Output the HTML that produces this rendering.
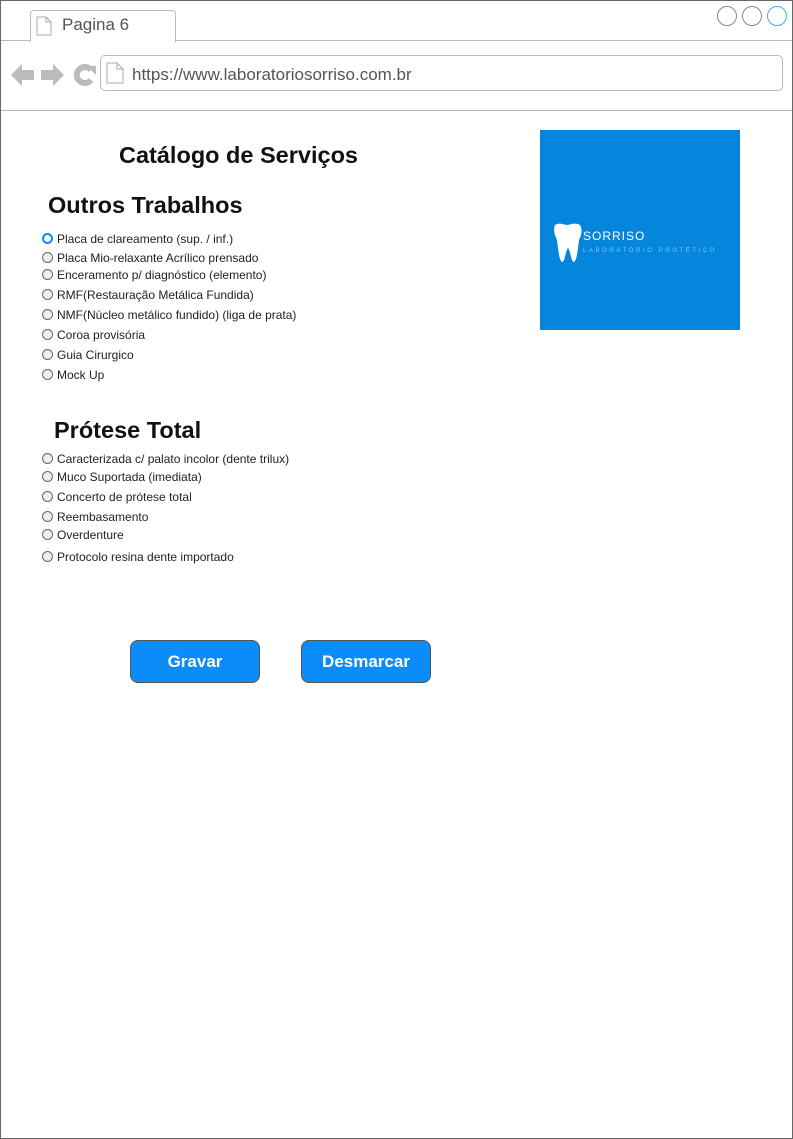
<!DOCTYPE html>
<html><head><meta charset="utf-8"><style>
body{margin:0;width:793px;height:1139px;position:relative;overflow:hidden;font-family:"Liberation Sans",sans-serif;background:#fff}
.a{position:absolute}
.frame{left:0;top:0;width:791px;height:1137px;border:1px solid #666}
.r{position:absolute;left:42px;font-size:12px;color:#222;line-height:14px}
.r i{position:absolute;left:0;top:1px;width:9px;height:9px;border:1px solid #666;border-radius:50%;background:#eee}
.r span{position:absolute;left:15px;top:0;white-space:nowrap}
.btn{position:absolute;top:640px;width:130px;height:43px;background:#0a8cfb;border:1px solid #555;border-radius:8px;color:#fff;font-weight:bold;font-size:17px;text-align:center;line-height:42px;box-sizing:border-box}
</style></head><body>
<div class="a frame"></div>
<div class="a" style="left:1px;top:40px;width:791px;height:1px;background:#bbb"></div>
<div class="a" style="left:30px;top:10px;width:144px;height:31px;border:1px solid #bbb;border-bottom:none;border-radius:4px 4px 0 0;background:#fff"></div>
<svg class="a" style="left:36px;top:16px" width="16" height="20"><path d="M1 1H10L15 6V19H1Z M10 1V6H15" fill="#fff" stroke="#aaa"/></svg>
<div class="a" style="left:62px;top:15px;font-size:17px;color:#555">Pagina 6</div>
<div class="a" style="left:717px;top:6px;width:18px;height:18px;border:1px solid #888;border-radius:50%"></div>
<div class="a" style="left:742px;top:6px;width:18px;height:18px;border:1px solid #888;border-radius:50%"></div>
<div class="a" style="left:767px;top:6px;width:18px;height:18px;border:1px solid #4af;border-radius:50%"></div>
<svg class="a" style="left:10px;top:62px" width="90" height="26">
<path d="M1 13L12 2V8H24V18H12V24Z" fill="#bbb"/>
<path d="M54 13L43 2V8H31V18H43V24Z" fill="#bbb"/>
<path d="M81 8A8 8 0 1 0 81 18" fill="none" stroke="#bbb" stroke-width="6"/>
<path d="M77 4H86V13Z" fill="#bbb"/>
</svg>
<div class="a" style="left:100px;top:55px;width:681px;height:34px;border:1px solid #bbb;border-radius:5px"></div>
<svg class="a" style="left:106px;top:62px" width="18" height="22"><path d="M1 1H11L17 7V21H1Z M11 1V7H17" fill="#fff" stroke="#aaa"/></svg>
<div class="a" style="left:132px;top:65px;font-size:17px;color:#555">https://www.laboratoriosorriso.com.br</div>
<div class="a" style="left:1px;top:110px;width:791px;height:1px;background:#bbb"></div>
<div class="a" style="left:119px;top:142px;font-size:23.5px;font-weight:bold;color:#111">Catálogo de Serviços</div>
<div class="a" style="left:48px;top:192px;font-size:23.5px;font-weight:bold;color:#111">Outros Trabalhos</div>
<div class="a" style="left:54px;top:417px;font-size:23.5px;font-weight:bold;color:#111">Prótese Total</div>
<div class="a" style="left:540px;top:130px;width:200px;height:200px;background:#0585dc"></div>
<svg class="a" style="left:552px;top:222px" width="32" height="42"><path d="M3 3C8 0 12 3 15 3C18 3 23 0 28 3C31 8 29 14 27 18C26 26 25 38 22 40C19 40 19 30 16 26C13 30 13 40 10 40C7 38 6 26 5 18C3 14 1 8 3 3Z" fill="#fff"/></svg>
<div class="a" style="left:583px;top:229px;font-size:12px;color:#fff;letter-spacing:1px">SORRISO</div>
<div class="a" style="left:583px;top:248px;font-size:6px;color:#7cc7ff;letter-spacing:2.6px">LABORATÓRIO PROTÉTICO</div>
<div class="r" style="top:232px"><i style="border:2px solid #0a8cfb;width:7px;height:7px;background:#fff"></i><span>Placa de clareamento (sup. / inf.)</span></div>
<div class="r" style="top:251px"><i></i><span>Placa Mio-relaxante Acrílico prensado</span></div>
<div class="r" style="top:268px"><i></i><span>Enceramento p/ diagnóstico (elemento)</span></div>
<div class="r" style="top:288px"><i></i><span>RMF(Restauração Metálica Fundida)</span></div>
<div class="r" style="top:308px"><i></i><span>NMF(Núcleo metálico fundido) (liga de prata)</span></div>
<div class="r" style="top:328px"><i></i><span>Coroa provisória</span></div>
<div class="r" style="top:348px"><i></i><span>Guia Cirurgico</span></div>
<div class="r" style="top:368px"><i></i><span>Mock Up</span></div>
<div class="r" style="top:452px"><i></i><span>Caracterizada c/ palato incolor (dente trilux)</span></div>
<div class="r" style="top:470px"><i></i><span>Muco Suportada (imediata)</span></div>
<div class="r" style="top:490px"><i></i><span>Concerto de prótese total</span></div>
<div class="r" style="top:510px"><i></i><span>Reembasamento</span></div>
<div class="r" style="top:528px"><i></i><span>Overdenture</span></div>
<div class="r" style="top:550px"><i></i><span>Protocolo resina dente importado</span></div>
<div class="btn" style="left:130px">Gravar</div>
<div class="btn" style="left:301px">Desmarcar</div>
</body></html>
